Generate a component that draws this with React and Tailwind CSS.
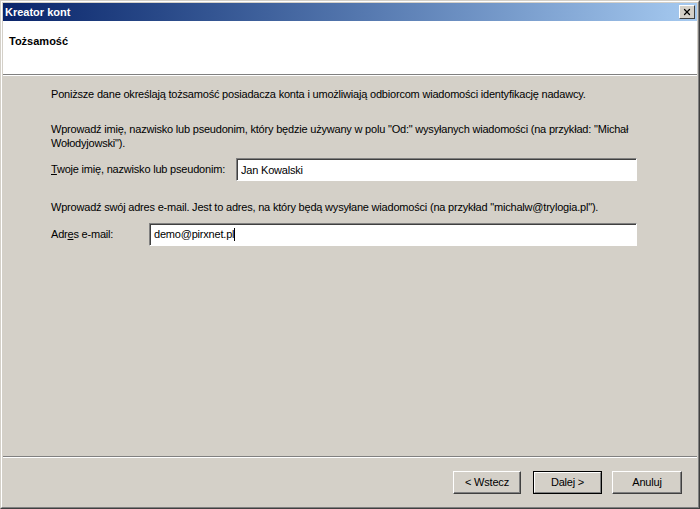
import { X } from "lucide-react";

export default function App() {
  const font = { fontFamily: '"Liberation Sans", Arial, sans-serif' };
  return (
    <div
      className="w-[700px] h-[509px] bg-[#d4d0c8] text-[11px] tracking-[-0.2px] text-black border-t border-l border-t-[#d4d0c8] border-l-[#d4d0c8] border-r border-b border-r-[#404040] border-b-[#404040] overflow-hidden"
      style={font}
    >
      <div className="h-full border-t border-l border-t-white border-l-white border-r border-b border-r-[#808080] border-b-[#808080] p-px flex flex-col">
        {/* pasek tytułu */}
        <div className="h-[18px] shrink-0 flex items-center justify-between pl-[2px] pr-[2px] bg-gradient-to-r from-[#0a246a] to-[#a6caf0]">
          <span className="text-white font-bold text-[11px] tracking-normal leading-none">Kreator kont</span>
          <button
            type="button"
            className="w-[16px] h-[14px] bg-[#d4d0c8] flex items-center justify-center border-t border-l border-t-white border-l-white border-r border-b border-r-[#404040] border-b-[#404040]"
          >
            <X size={10} strokeWidth={3} color="#000" />
          </button>
        </div>

        {/* nagłówek */}
        <div className="h-[53px] shrink-0 bg-white pl-[6px] pt-[12px]">
          <h1 className="font-bold text-[11px] tracking-normal">Tożsamość</h1>
        </div>
        <div className="h-px bg-[#808080] shrink-0" />
        <div className="h-px bg-white shrink-0" />

        {/* treść */}
        <div className="flex-1 pl-[48px] pr-[50px] pt-[11px]">
          <p className="leading-[14px]">
            Poniższe dane określają tożsamość posiadacza konta i umożliwiają odbiorcom wiadomości identyfikację nadawcy.
          </p>
          <p className="leading-[14px] mt-[21px]">
            Wprowadź imię, nazwisko lub pseudonim, który będzie używany w polu "Od:" wysyłanych wiadomości (na przykład: "Michał Wołodyjowski").
          </p>
          <div className="flex items-center mt-[8px] h-[23px]">
            <label className="w-[185px] shrink-0">
              <span className="underline">T</span>woje imię, nazwisko lub pseudonim:
            </label>
            <input
              readOnly
              value="Jan Kowalski"
              className="w-[401px] h-[23px] bg-white px-[4px] text-[11px] tracking-[-0.2px] outline-none border-t border-l border-t-[#808080] border-l-[#808080] border-r border-b border-r-white border-b-white shadow-[inset_1px_1px_0_#404040]"
              style={font}
            />
          </div>
          <p className="leading-[14px] mt-[19px]">
            Wprowadź swój adres e-mail. Jest to adres, na który będą wysyłane wiadomości (na przykład "michalw@trylogia.pl").
          </p>
          <div className="flex items-center mt-[9px] h-[23px]">
            <label className="w-[98px] shrink-0">
              Adr<span className="underline">e</span>s e-mail:
            </label>
            <div className="w-[488px] h-[23px] bg-white px-[4px] flex items-center border-t border-l border-t-[#808080] border-l-[#808080] border-r border-b border-r-white border-b-white shadow-[inset_1px_1px_0_#404040]">
              <span>demo@pirxnet.pl</span>
              <span className="w-px h-[13px] bg-black" />
            </div>
          </div>
        </div>

        <div className="h-px bg-[#808080] shrink-0" />
        <div className="h-px bg-white shrink-0" />

        {/* przyciski */}
        <div className="h-[48px] shrink-0 flex items-start justify-end pt-[13px] pr-[15px]">
          <button
            type="button"
            className="w-[68px] h-[23px] bg-[#d4d0c8] border-t border-l border-t-white border-l-white border-r border-b border-r-[#404040] border-b-[#404040] shadow-[inset_-1px_-1px_0_#808080]"
          >
            &lt; Wstecz
          </button>
          <button
            type="button"
            className="ml-[12px] w-[69px] h-[23px] bg-[#d4d0c8] border border-black"
          >
            <span className="flex w-full h-full items-center justify-center border-t border-l border-t-white border-l-white border-r border-b border-r-[#808080] border-b-[#808080]">
              Dalej &gt;
            </span>
          </button>
          <button
            type="button"
            className="ml-[10px] w-[70px] h-[23px] bg-[#d4d0c8] border-t border-l border-t-white border-l-white border-r border-b border-r-[#404040] border-b-[#404040] shadow-[inset_-1px_-1px_0_#808080]"
          >
            Anuluj
          </button>
        </div>
      </div>
    </div>
  );
}
